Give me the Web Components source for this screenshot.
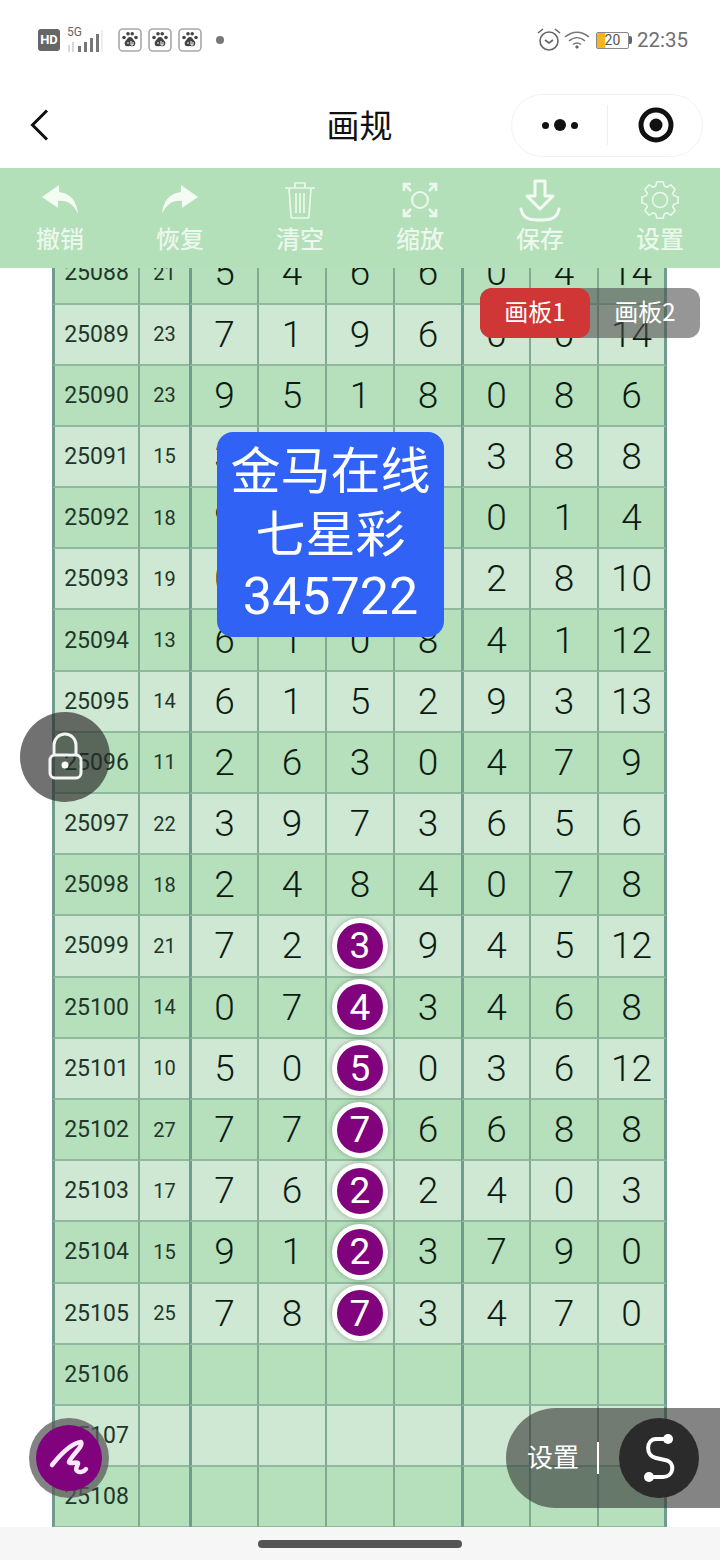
<!DOCTYPE html>
<html lang="zh">
<head>
<meta charset="utf-8">
<title>画规</title>
<style>
html, body { margin: 0; padding: 0; background: #fff; }
body { width: 720px; height: 1560px; overflow: hidden; position: relative; font-family: Roboto, "Noto Sans CJK SC", sans-serif; }
.app { display: flex; flex-direction: column; height: 1560px; }
.digits { font-size: 52px; }
</style>
</head>
<body>
<div class="app">
  <status-bar></status-bar>
  <nav-bar title="画规"></nav-bar>
  <tool-bar>
    <tool-item label="撤销"><svg width="44" height="44" viewBox="0 0 44 44"><path d="M21 7 4 19l16 11v-7c8-1 15 2 20 13C39 23 32 15 21 14z" fill="#fff" fill-opacity=".85"/></svg></tool-item>
    <tool-item label="恢复"><svg width="44" height="44" viewBox="0 0 44 44"><path d="M23 7l17 12-16 11v-7C16 22 9 25 4 36 5 23 12 15 23 14z" fill="#fff" fill-opacity=".85"/></svg></tool-item>
    <tool-item label="清空"><svg width="44" height="44" viewBox="0 0 44 44" fill="none" stroke="currentColor" stroke-width="1.700"><path d="M7 10h30M17 10V5h10v5M11 10l2 28q0 2 2 2h14q2 0 2-2l2-28M18 15v20M22 15v20M26 15v20"/></svg></tool-item>
    <tool-item label="缩放"><svg width="44" height="44" viewBox="0 0 44 44" fill="none" stroke="currentColor" stroke-width="2.600"><circle cx="22" cy="22" r="8" stroke-width="2"/><path d="M6 13V6h7M6 6l7 7M38 13V6h-7M38 6l-7 7M6 31v7h7M6 38l7-7M38 31v7h-7M38 38l-7-7"/></svg></tool-item>
    <tool-item label="保存"><svg width="44" height="44" viewBox="0 0 44 44" fill="none" stroke="#fff" stroke-opacity=".85" stroke-width="3"><path d="M17 3h10v15h8L22 31 9 18h8z" stroke-linejoin="round"/><path d="M3 31c2 11 11 11 19 11s17 0 19-11" stroke-linecap="round"/></svg></tool-item>
    <tool-item label="设置"><svg width="44" height="44" viewBox="0 0 44 44" fill="none" stroke="currentColor" stroke-width="1.600"><circle cx="22" cy="22" r="7.500"/><path id="gear" stroke-linejoin="round"/></svg></tool-item>
  </tool-bar>
  <lottery-table></lottery-table>
  <home-bar></home-bar>
</div>
<board-tabs></board-tabs>
<notice-box>金马在线<br>七星彩<br><span class="digits">345722</span></notice-box>
<lock-button></lock-button>
<pen-button></pen-button>
<settings-pill></settings-pill>

<script>
class StatusBar extends HTMLElement {
  connectedCallback() {
    const paw = `<svg width="24" height="24" viewBox="0 0 24 24"><rect x="1" y="1" width="22" height="22" rx="4" fill="#fff" stroke="#a8a8a8" stroke-width="1.600"/><g fill="#444"><circle cx="6" cy="9.500" r="1.800"/><circle cx="10" cy="5.800" r="1.800"/><circle cx="14.200" cy="5.800" r="1.800"/><circle cx="18" cy="9.500" r="1.800"/><path d="M12 9c-2.200 0-2.800 2.200-4.300 3.700-1.800 1.700-1.300 5.400 1.700 5.600 1.200.1 1.700-.4 2.600-.4s1.400.5 2.600.4c3-.2 3.500-3.900 1.700-5.600C14.800 11.200 14.200 9 12 9z"/></g><path d="M10 16v-2M13 13v4h2v-3" stroke="#fff" fill="none"/></svg>`;
    this.attachShadow({ mode: 'open' });
    this.shadowRoot.innerHTML = `
      <style>
        :host { display: flex; height: 76px; padding: 4px 32px 0 38px; box-sizing: border-box; align-items: center; justify-content: space-between; color: #666; }
        .side { display: flex; align-items: center; }
        .hd { width: 22px; height: 22px; background: #666; color: #fff; border-radius: 3px; font: 700 13px/22px Roboto, sans-serif; text-align: center; }
        .net { position: relative; width: 38px; height: 26px; margin-left: 6px; }
        .net span { position: absolute; left: 1px; top: -1px; font: 12px/12px Roboto, sans-serif; }
        .net svg { position: absolute; left: 0; top: 0; }
        .paws { display: flex; gap: 6px; margin-left: 14px; }
        .dot { width: 8px; height: 8px; border-radius: 50%; background: #777; margin-left: 14px; }
        .time { font: 20.500px/24px Roboto, sans-serif; color: #707070; margin-left: 5px; }
        .bat { position: relative; width: 33px; height: 17px; border: 1px solid #888; border-radius: 2px; box-sizing: border-box; margin-left: 6px; font: 14px/15px Roboto, sans-serif; text-align: center; color: #555; }
        .bat i { position: absolute; left: 0; top: 0; bottom: 0; width: 8px; background: #f3b61f; }
        .bat b { position: relative; font-weight: 400; }
        .nub { width: 3px; height: 8px; background: #666; border-radius: 0 2px 2px 0; }
      </style>
      <div class="side">
        <div class="hd">HD</div>
        <div class="net"><span>5G</span>
          <svg width="38" height="26" viewBox="0 0 38 26"><path d="M3 18v7M7 15v10" stroke="#ccc" stroke-width="1.500"/><g fill="#777"><rect x="12" y="19" width="3" height="6"/><rect x="18" y="15" width="3" height="10"/><rect x="24" y="11" width="3" height="14"/><rect x="30" y="7" width="3" height="18"/></g><path d="M36 3v22" stroke="#ddd"/></svg>
        </div>
        <div class="paws">${paw}${paw}${paw}</div>
        <div class="dot"></div>
      </div>
      <div class="side">
        <svg width="26" height="26" viewBox="0 0 26 26" fill="none" stroke="#666" stroke-width="1.600"><circle cx="13" cy="14" r="9"/><path d="M9 13l4 3 4-3M2 6l5-4M24 6l-5-4"/></svg>
        <svg width="26" height="22" viewBox="0 0 26 22" fill="none" stroke="#777" stroke-width="1.500" style="margin-left:2px"><path d="M1 8c7.500-6.500 16.500-6.500 24 0M5 12c5-4.500 11-4.500 16 0M9 15.500c2.500-2 5.500-2 8 0"/><path d="M11 18l2-2 2 2-2 2z" fill="#666" stroke="none"/></svg>
        <div class="bat"><i></i><b>20</b></div><div class="nub"></div>
        <div class="time">22:35</div>
      </div>`;
  }
}
customElements.define('status-bar', StatusBar);

class NavBar extends HTMLElement {
  connectedCallback() {
    this.attachShadow({ mode: 'open' });
    this.shadowRoot.innerHTML = `
      <style>
        :host { display: grid; grid-template-columns: 1fr auto 1fr; align-items: center; height: 92px; padding: 6px 17px 0 30px; box-sizing: border-box; }
        .back { display: block; }
        h1 { margin: 0; font: 400 33px/44px "Noto Sans CJK SC", sans-serif; color: #111; transform: translate(-7px, -1px); }
        .capsule { justify-self: end; width: 192px; height: 63px; box-sizing: border-box; border: 1px solid #f2f2f2; border-radius: 32px; display: grid; grid-template-columns: 96px 1fr; align-items: center; background: #fff; }
        .capsule > div { display: flex; align-items: center; justify-content: center; height: 40px; }
        .capsule > div:first-child { border-right: 1px solid #eee; gap: 5px; }
        .capsule i { display: block; width: 7px; height: 7px; border-radius: 50%; background: #111; }
        .capsule i.big { width: 12px; height: 12px; }
      </style>
      <svg class="back" width="20" height="32" viewBox="0 0 20 32" fill="none" stroke="#111" stroke-width="3"><path d="M17 1.500 2.500 16 17 30.500"/></svg>
      <h1>${this.getAttribute('title')}</h1>
      <div class="capsule">
        <div><i></i><i class="big"></i><i></i></div>
        <div><svg width="38" height="38" viewBox="0 0 38 38" style="margin-left:2px"><circle cx="19" cy="19" r="15" fill="none" stroke="#111" stroke-width="5"/><circle cx="19" cy="19" r="6.500" fill="#111"/></svg></div>
      </div>`;
  }
}
customElements.define('nav-bar', NavBar);

class ToolBar extends HTMLElement {
  connectedCallback() {
    this.attachShadow({ mode: 'open' });
    this.shadowRoot.innerHTML = `
      <style>
        :host { display: grid; grid-template-columns: repeat(6, 1fr); height: 100px; background: #b3e0b8; position: relative; z-index: 2; flex: none; }
      </style>
      <slot></slot>`;
  }
}
customElements.define('tool-bar', ToolBar);

class ToolItem extends HTMLElement {
  connectedCallback() {
    this.attachShadow({ mode: 'open' });
    this.shadowRoot.innerHTML = `
      <style>
        :host { display: flex; flex-direction: column; align-items: center; padding-top: 10px; color: rgba(255,255,255,.75); }
        .icon { height: 44px; }
        .icon ::slotted(svg) { display: block; }
        .label { font: 500 24px/32px "Noto Sans CJK SC", sans-serif; }
      </style>
      <div class="icon"><slot></slot></div>
      <div class="label">${this.getAttribute('label')}</div>`;
  }
}
customElements.define('tool-item', ToolItem);

// eight-toothed outline for the settings icon
let gearD = '';
for (let i = 0; i < 8; i++) {
  const a = i * Math.PI / 4;
  [[-0.30, 14.500], [-0.17, 18.500], [0.17, 18.500], [0.30, 14.500]].forEach(([da, r], j) => {
    const x = (22 + r * Math.cos(a + da)).toFixed(1);
    const y = (22 + r * Math.sin(a + da)).toFixed(1);
    gearD += (i === 0 && j === 0 ? 'M' : 'L') + x + ' ' + y;
  });
}
document.getElementById('gear').setAttribute('d', gearD + 'Z');

// period, sum, seven digits; the third digit is ringed when the last field is set
const ROWS = [
  [25088, 21, '5 4 6 6 0 4 14'], [25089, 23, '7 1 9 6 0 0 14'], [25090, 23, '9 5 1 8 0 8 6'],
  [25091, 15, '3 6 1 5 3 8 8'], [25092, 18, '9 2 7 0 0 1 4'], [25093, 19, '0 3 5 9 2 8 10'],
  [25094, 13, '6 1 0 8 4 1 12'], [25095, 14, '6 1 5 2 9 3 13'], [25096, 11, '2 6 3 0 4 7 9'],
  [25097, 22, '3 9 7 3 6 5 6'], [25098, 18, '2 4 8 4 0 7 8'],
  [25099, 21, '7 2 3 9 4 5 12', 1], [25100, 14, '0 7 4 3 4 6 8', 1], [25101, 10, '5 0 5 0 3 6 12', 1],
  [25102, 27, '7 7 7 6 6 8 8', 1], [25103, 17, '7 6 2 2 4 0 3', 1], [25104, 15, '9 1 2 3 7 9 0', 1],
  [25105, 25, '7 8 7 3 4 7 0', 1],
  [25106, '', ''], [25107, '', ''], [25108, '', '']
];

class LotteryTable extends HTMLElement {
  connectedCallback() {
    const cells = ROWS.map(([no, sum, nums, ball]) => {
      const tone = no % 2 ? 'light' : 'dark';
      const digits = nums ? nums.split(' ') : ['', '', '', '', '', '', ''];
      const big = digits.map((d, i) => {
        const thick = i === 0 || i === 4 ? ' thick' : '';
        const last = i === 6 ? ' end' : '';
        const inner = ball && i === 2 ? `<span class="ball">${d}</span>` : d;
        return `<div class="c big ${tone}${thick}${last}">${inner}</div>`;
      }).join('');
      return `<div class="c no thick ${tone}">${no}</div><div class="c sum ${tone}">${sum}</div>${big}`;
    }).join('');
    this.attachShadow({ mode: 'open' });
    this.shadowRoot.innerHTML = `
      <style>
        :host { display: block; flex: 1; min-height: 0; overflow: hidden; font-family: Roboto, sans-serif; color: #22352a; }
        .grid { display: grid; grid-template-columns: 86px 51px repeat(6, 68px) 70px; grid-auto-rows: 61.200px; margin: -24.700px 0 0 52px; width: 615px; }
        .c { display: flex; align-items: center; justify-content: center; box-sizing: border-box; border-left: 2px solid #7fa993; border-bottom: 2px solid #8fb99c; }
        .thick { border-left: 3px solid #6f9c8c; }
        .end { border-right: 3px solid #6f9c8c; }
        .light { background: #cfe8d3; }
        .dark { background: #b5e0bb; }
        .no { font-size: 23px; }
        .sum { font-size: 20px; }
        .big { font-size: 37px; font-weight: 300; color: #0c1b12; }
        .ball { width: 46px; height: 46px; flex: none; border-radius: 50%; background: #80027c; border: 5px solid #fff; box-sizing: content-box; box-shadow: 0 0 5px rgba(0,0,0,.3); color: #fff; font-weight: 400; display: flex; align-items: center; justify-content: center; }
      </style>
      <div class="grid">${cells}</div>`;
  }
}
customElements.define('lottery-table', LotteryTable);

class HomeBar extends HTMLElement {
  connectedCallback() {
    this.attachShadow({ mode: 'open' });
    this.shadowRoot.innerHTML = `
      <style>
        :host { display: flex; flex: none; height: 33px; background: #f6f6f6; align-items: flex-start; justify-content: center; }
        i { display: block; width: 204px; height: 8px; margin-top: 13px; background: #555; border-radius: 4px; }
      </style>
      <i></i>`;
  }
}
customElements.define('home-bar', HomeBar);

class BoardTabs extends HTMLElement {
  connectedCallback() {
    this.attachShadow({ mode: 'open' });
    this.shadowRoot.innerHTML = `
      <style>
        :host { position: absolute; left: 480px; top: 288px; z-index: 3; display: flex; width: 220px; height: 50px; border-radius: 12px; background: rgba(80,80,80,.6); font: 24px/46px "Noto Sans CJK SC", Roboto, sans-serif; color: #fff; text-align: center; }
        div { flex: 1; }
        .on { background: #d13636; border-radius: 12px; }
      </style>
      <div class="on">画板1</div><div>画板2</div>`;
  }
}
customElements.define('board-tabs', BoardTabs);

class NoticeBox extends HTMLElement {
  connectedCallback() {
    this.attachShadow({ mode: 'open' });
    this.shadowRoot.innerHTML = `
      <style>
        :host { position: absolute; left: 217px; top: 432px; z-index: 3; width: 227px; height: 205px; box-sizing: border-box; padding-top: 9px; border-radius: 16px; background: #2f62f5; color: #fff; font: 50px/62.500px Roboto, "Noto Sans CJK SC", sans-serif; text-align: center; }
      </style>
      <slot></slot>`;
  }
}
customElements.define('notice-box', NoticeBox);

class LockButton extends HTMLElement {
  connectedCallback() {
    this.attachShadow({ mode: 'open' });
    this.shadowRoot.innerHTML = `
      <style>
        :host { position: absolute; left: 20px; top: 712px; z-index: 3; width: 90px; height: 90px; border-radius: 50%; background: rgba(40,40,40,.66); display: flex; align-items: center; justify-content: center; }
        svg { display: block; }
      </style>
      <svg width="90" height="90" viewBox="0 0 90 90" fill="none" stroke="#f4f4f4" stroke-width="3"><path d="M34 42V33a11 11 0 0 1 22 0v9"/><rect x="30" y="43" width="31" height="23" rx="5"/><circle cx="45" cy="53" r="3.500" fill="#fff" stroke="none"/></svg>`;
  }
}
customElements.define('lock-button', LockButton);

class PenButton extends HTMLElement {
  connectedCallback() {
    this.attachShadow({ mode: 'open' });
    this.shadowRoot.innerHTML = `
      <style>
        :host { position: absolute; left: 29px; top: 1418px; z-index: 3; width: 80px; height: 80px; border-radius: 50%; background: rgba(90,90,90,.75); display: flex; align-items: center; justify-content: center; }
        div { width: 66px; height: 66px; border-radius: 50%; background: #80027c; }
        svg { display: block; }
      </style>
      <div><svg width="66" height="66" viewBox="0 0 66 66" fill="none" stroke="#fbe9fb" stroke-width="4.500" stroke-linecap="round" stroke-linejoin="round"><path d="M16 40C24 30 36 18 45 17c3 4-10 14-12 20 1 3 8-1 9 1 1 2-4 5-1 8 2 2 7 1 9-2"/></svg></div>`;
  }
}
customElements.define('pen-button', PenButton);

class SettingsPill extends HTMLElement {
  connectedCallback() {
    this.attachShadow({ mode: 'open' });
    this.shadowRoot.innerHTML = `
      <style>
        :host { position: absolute; left: 506px; top: 1408px; z-index: 3; width: 214px; height: 100px; box-sizing: border-box; padding-left: 21px; border-radius: 50px 0 0 50px; background: rgba(50,50,50,.6); display: flex; align-items: center; color: #fff; font: 26px/32px "Noto Sans CJK SC", sans-serif; }
        span { transform: translateY(-2px); }
        .sep { width: 2px; height: 32px; background: #fff; margin-left: 18px; }
        .s { width: 80px; height: 80px; margin-left: 20px; border-radius: 50%; background: #2b2b2b; }
        svg { display: block; }
      </style>
      <span>设置</span><div class="sep"></div>
      <div class="s"><svg width="80" height="80" viewBox="0 0 80 80" fill="none" stroke="#fff" stroke-width="4"><path d="M49 21H37c-10 0-11 17 0 19l9 2c11 2 9 17-2 17H30"/><circle cx="49" cy="21" r="5" fill="#fff" stroke="none"/><circle cx="30" cy="59" r="5" fill="#fff" stroke="none"/></svg></div>`;
  }
}
customElements.define('settings-pill', SettingsPill);
</script>
</body>
</html>
